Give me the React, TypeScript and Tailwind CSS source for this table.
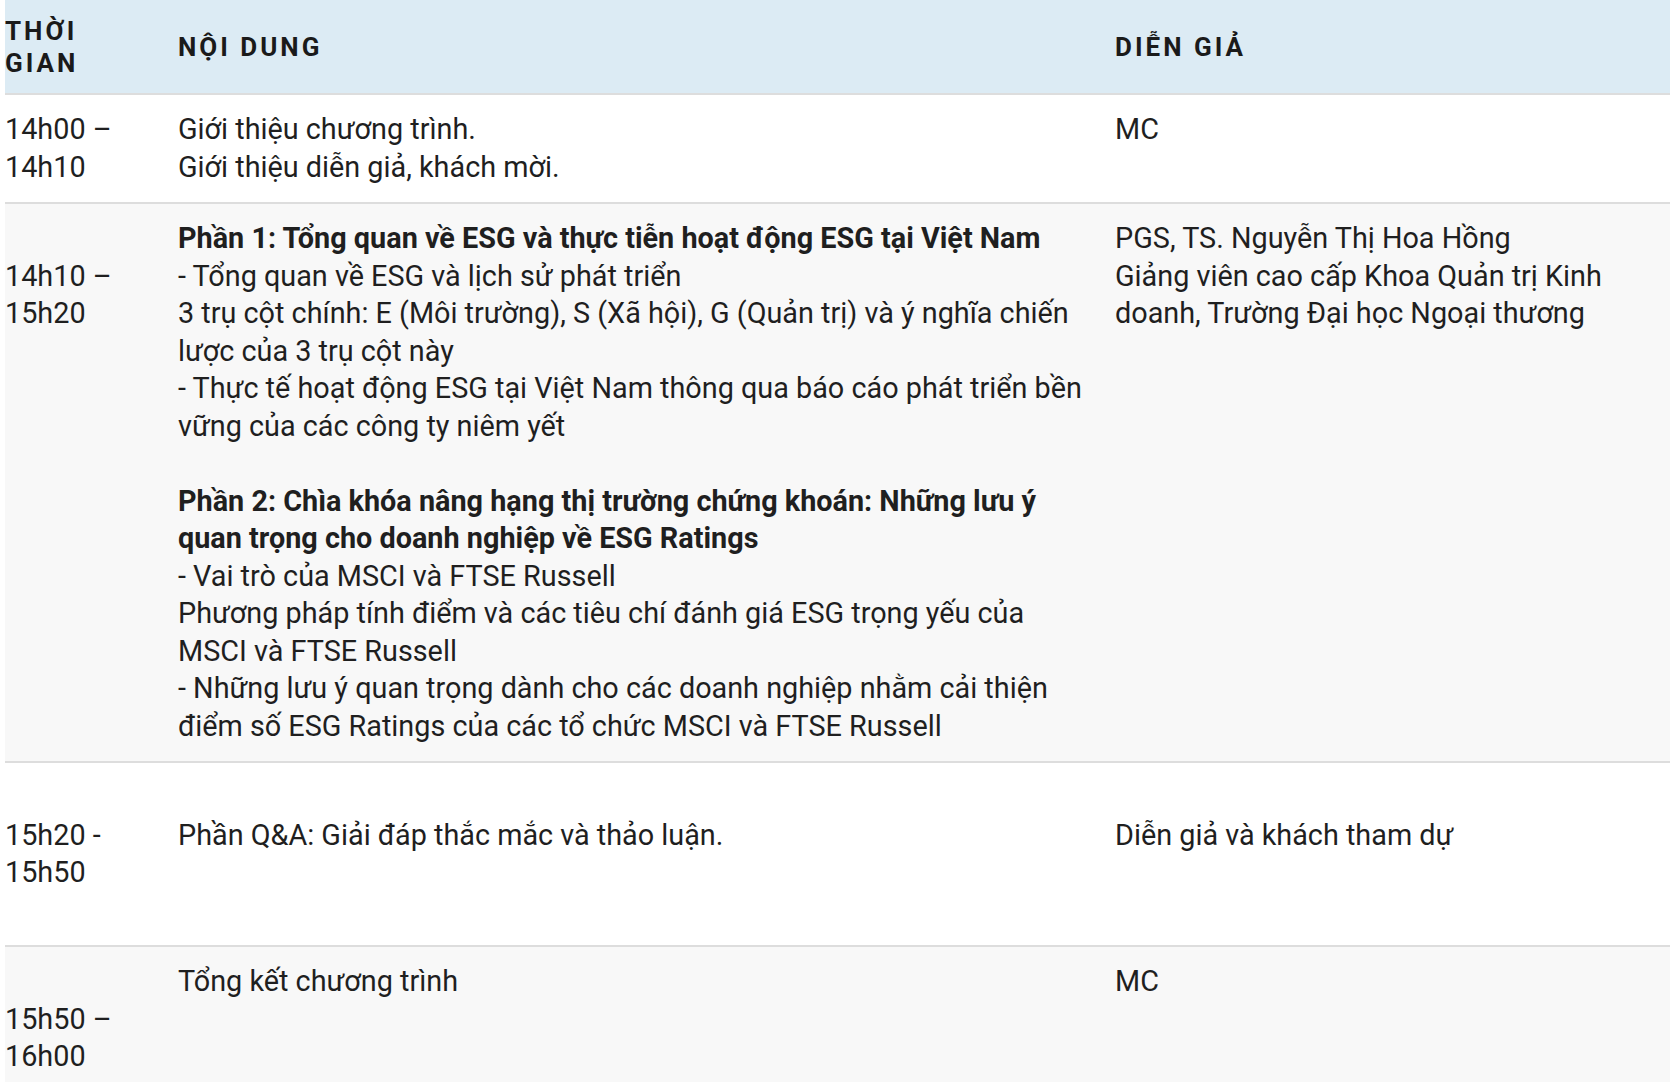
import React from "react";

const font = { fontFamily: "Roboto, 'Noto Sans', sans-serif" };

function Line({ children, bold }: { children?: React.ReactNode; bold?: boolean }) {
  return <div className={bold ? "font-bold" : ""}>{children ?? "\u00a0"}</div>;
}

type Row = { time: React.ReactNode; content: React.ReactNode; speaker: React.ReactNode; alt?: boolean };

const rows: Row[] = [
  {
    time: (
      <>
        <Line>14h00 –</Line>
        <Line>14h10</Line>
      </>
    ),
    content: (
      <>
        <Line>Giới thiệu chương trình.</Line>
        <Line>Giới thiệu diễn giả, khách mời.</Line>
      </>
    ),
    speaker: <Line>MC</Line>,
  },
  {
    alt: true,
    time: (
      <>
        <Line />
        <Line>14h10 –</Line>
        <Line>15h20</Line>
      </>
    ),
    content: (
      <>
        <Line bold>Phần 1: Tổng quan về ESG và thực tiễn hoạt động ESG tại Việt Nam</Line>
        <Line>- Tổng quan về ESG và lịch sử phát triển</Line>
        <Line>3 trụ cột chính: E (Môi trường), S (Xã hội), G (Quản trị) và ý nghĩa chiến lược của 3 trụ cột này</Line>
        <Line>- Thực tế hoạt động ESG tại Việt Nam thông qua báo cáo phát triển bền vững của các công ty niêm yết</Line>
        <Line />
        <Line bold>Phần 2: Chìa khóa nâng hạng thị trường chứng khoán: Những lưu ý quan trọng cho doanh nghiệp về ESG Ratings</Line>
        <Line>- Vai trò của MSCI và FTSE Russell</Line>
        <Line>Phương pháp tính điểm và các tiêu chí đánh giá ESG trọng yếu của MSCI và FTSE Russell</Line>
        <Line>- Những lưu ý quan trọng dành cho các doanh nghiệp nhằm cải thiện điểm số ESG Ratings của các tổ chức MSCI và FTSE Russell</Line>
      </>
    ),
    speaker: (
      <>
        <Line>PGS, TS. Nguyễn Thị Hoa Hồng</Line>
        <Line>Giảng viên cao cấp Khoa Quản trị Kinh doanh, Trường Đại học Ngoại thương</Line>
      </>
    ),
  },
  {
    time: (
      <>
        <Line />
        <Line>15h20 -</Line>
        <Line>15h50</Line>
        <Line />
      </>
    ),
    content: (
      <>
        <Line />
        <Line>Phần Q&amp;A: Giải đáp thắc mắc và thảo luận.</Line>
      </>
    ),
    speaker: (
      <>
        <Line />
        <Line>Diễn giả và khách tham dự</Line>
      </>
    ),
  },
  {
    alt: true,
    time: (
      <>
        <Line />
        <Line>15h50 –</Line>
        <Line>16h00</Line>
      </>
    ),
    content: <Line>Tổng kết chương trình</Line>,
    speaker: <Line>MC</Line>,
  },
];

export default function App() {
  return (
    <div className="min-h-screen bg-white pl-[5px] overflow-hidden" style={font}>
      <div className="w-[1665px]">
        <div className="grid grid-cols-[173px_937px_1fr] h-[95px] items-center bg-[#dcebf4] border-b-2 border-[#dddddd] text-[#1a1a1a] font-bold uppercase text-[26px] leading-[32px] tracking-[3px]">
          <div className="pr-[40px]">Thời gian</div>
          <div className="pr-[30px]">Nội dung</div>
          <div className="pr-[20px]">Diễn giả</div>
        </div>
        {rows.map((r, i) => (
          <div
            key={i}
            className={`grid grid-cols-[173px_937px_1fr] py-[16px] border-b-2 border-[#dddddd] text-[#1f1f1f] text-[28.8px] leading-[37.5px] ${r.alt ? "bg-[#f8f8f8]" : "bg-white"}`}
          >
            <div className="pr-[40px]">{r.time}</div>
            <div className="pr-[30px]">{r.content}</div>
            <div className="pr-[20px]">{r.speaker}</div>
          </div>
        ))}
      </div>
    </div>
  );
}
